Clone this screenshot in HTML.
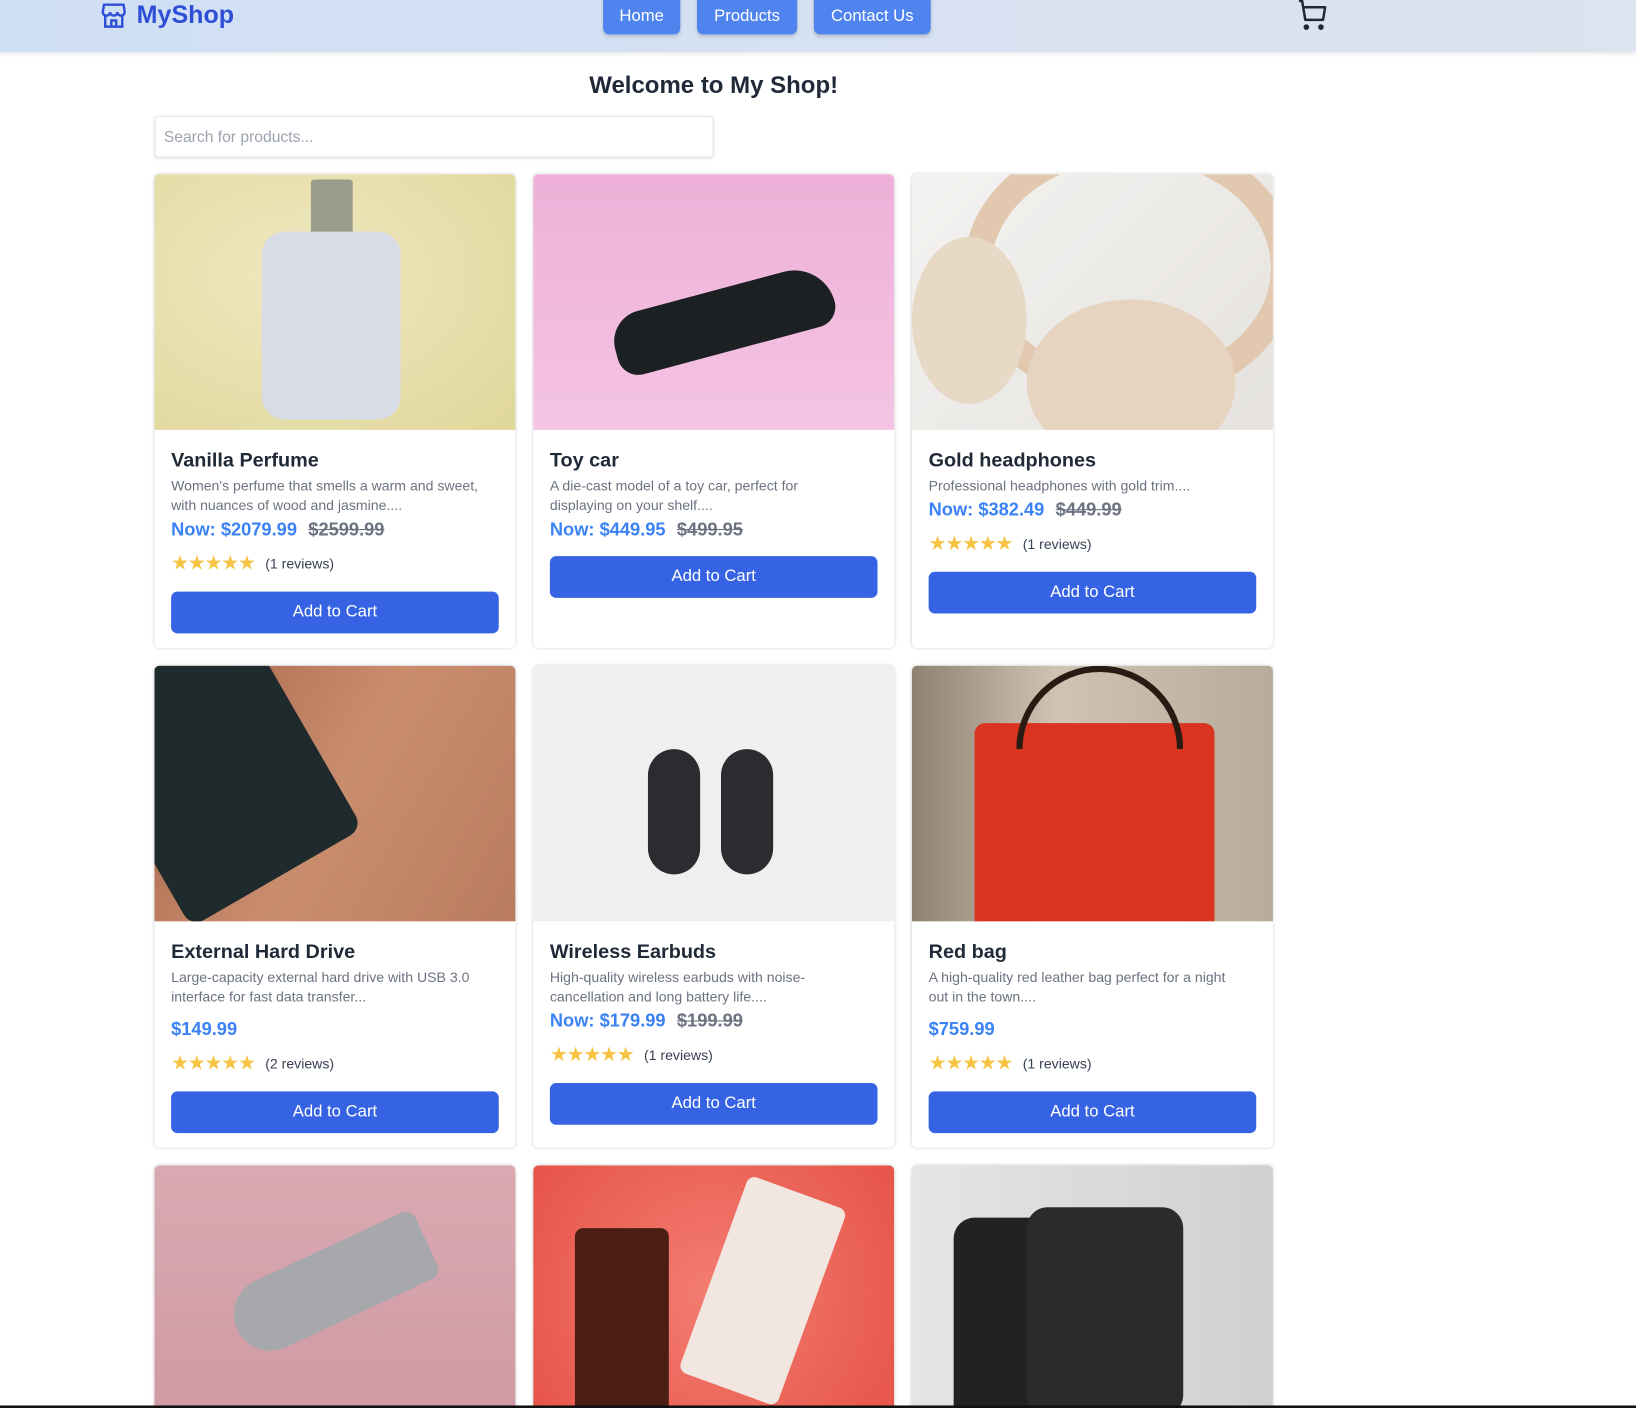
<!DOCTYPE html>
<html><head><meta charset="utf-8"><style>
*{box-sizing:border-box;margin:0;padding:0}
html,body{width:1636px;height:1408px;overflow:hidden;background:#fff}
#w{width:1568px;height:1350px;transform:scale(1.0434);transform-origin:0 0;position:relative;font-family:"Liberation Sans",sans-serif}
.hdr{position:absolute;left:0;top:0;width:1568px;height:50px;background:linear-gradient(90deg,#cfdff5,#dde3ef);box-shadow:0 2px 4px rgba(0,0,0,.08)}
.logo{position:absolute;left:95px;top:0;height:30px;display:flex;align-items:center;gap:8px;color:#2f4fd6;font-weight:bold;font-size:24px}
.nav{position:absolute;top:-6px;height:39px;background:#4f83ee;color:#fff;border-radius:6px;font-size:16px;display:flex;align-items:center;justify-content:center;padding-top:4px;box-shadow:0 2px 3px rgba(0,0,0,.15)}
h1{position:absolute;left:0;width:1368px;top:68px;text-align:center;font-size:23px;color:#1f2937}
.search{position:absolute;left:148px;top:111px;width:536px;height:40px;border:1px solid #e2e4e8;border-radius:4px;box-shadow:0 1px 3px rgba(0,0,0,.1);font-size:15px;color:#9ca3af;padding:11px 8px}
.card{position:absolute;width:346px;background:#fff;border-radius:5px;box-shadow:0 0 3px rgba(0,0,0,.18);overflow:hidden}
.r1{height:454px}.r2{height:462px}
.img{height:245px;position:relative;overflow:hidden}
.body{padding:16px 16px 15px}
.t{font-size:19px;font-weight:bold;color:#1f2937;line-height:28px}
.d{font-size:13.5px;color:#6b7280;line-height:19px}
.p{font-size:17.5px;font-weight:bold;color:#3b82f6;line-height:26px}
.p s{color:#6b7280;margin-left:6px}
.p.pl{margin-top:8px}
.st{margin-top:11px;line-height:20px;font-size:13.5px;color:#374151;display:flex;align-items:center}
.st b{color:#f6c343;font-size:19px;letter-spacing:-1px;margin-right:10px;font-weight:normal}
.btn{margin-top:16px;height:40px;background:#3563e3;border-radius:6px;color:#fff;font-size:16px;display:flex;align-items:center;justify-content:center}
.btn.n{margin-top:13px}
</style></head><body><div id="w">
<div class="hdr">
<div class="logo"><svg width="28" height="28" viewBox="0 0 24 24" fill="none" stroke="#2f4fd6" stroke-width="2"><path d="M4 3h16l1 6a3 3 0 0 1-6 0 3 3 0 0 1-6 0 3 3 0 0 1-6 0z"/><path d="M5 11v10h14V11M10 21v-5h4v5"/></svg>MyShop</div>
<div class="nav" style="left:578px;width:74px">Home</div>
<div class="nav" style="left:668px;width:96px">Products</div>
<div class="nav" style="left:780px;width:112px">Contact Us</div>
<svg style="position:absolute;left:1243px;top:0" width="32" height="32" viewBox="0 0 32 32" fill="none" stroke="#1f2937" stroke-width="2.4" stroke-linecap="round" stroke-linejoin="round"><path d="M3 1h2l3 18h17l2-12H7"/><circle cx="9" cy="26" r="1.5" fill="#1f2937"/><circle cx="23" cy="26" r="1.5" fill="#1f2937"/></svg>
</div>
<h1>Welcome to My Shop!</h1>
<div class="search">Search for products...</div>

<div class="card r1" style="left:148px;top:167px"><div class="img" style="background:radial-gradient(ellipse at 40% 40%,#efe8c0,#e0d79a)"><div style="position:absolute;left:150px;top:5px;width:40px;height:55px;background:#9a9c8c;border-radius:3px"></div><div style="position:absolute;left:103px;top:55px;width:133px;height:180px;background:#d8dce6;border-radius:22px"></div></div>
<div class="body"><div class="t">Vanilla Perfume</div><div class="d">Women's perfume that smells a warm and sweet, with nuances of wood and jasmine....</div><div class="p">Now: $2079.99 <s>$2599.99</s></div><div class="st"><b>★★★★★</b>(1 reviews)</div><div class="btn">Add to Cart</div></div></div>

<div class="card r1" style="left:511px;top:167px"><div class="img" style="background:linear-gradient(180deg,#eeb0d8,#f4c4e4)"><div style="position:absolute;left:75px;top:110px;width:215px;height:60px;background:#1d2022;border-radius:30px 40px 20px 20px;transform:rotate(-15deg)"></div></div>
<div class="body"><div class="t">Toy car</div><div class="d" style="width:260px">A die-cast model of a toy car, perfect for displaying on your shelf....</div><div class="p">Now: $449.95 <s>$499.95</s></div><div class="btn n">Add to Cart</div></div></div>

<div class="card r1" style="left:874px;top:167px"><div class="img" style="background:linear-gradient(135deg,#f4f3f1,#e5e2de)"><div style="position:absolute;left:50px;top:-40px;width:320px;height:260px;border:26px solid #e2c8ae;border-radius:50%"></div><div style="position:absolute;left:0;top:60px;width:110px;height:160px;background:#e8d8c6;border-radius:50%"></div><div style="position:absolute;left:110px;top:120px;width:200px;height:160px;background:#e6d4c0;border-radius:50%"></div></div>
<div class="body"><div class="t">Gold headphones</div><div class="d">Professional headphones with gold trim....</div><div class="p">Now: $382.49 <s>$449.99</s></div><div class="st"><b>★★★★★</b>(1 reviews)</div><div class="btn">Add to Cart</div></div></div>

<div class="card r2" style="left:148px;top:638px"><div class="img" style="background:linear-gradient(120deg,#a8644a,#c98d6e 50%,#b97c60)"><div style="position:absolute;left:-40px;top:-30px;width:190px;height:250px;background:#1f2a2c;border-radius:14px;transform:rotate(-30deg)"></div></div>
<div class="body"><div class="t">External Hard Drive</div><div class="d">Large-capacity external hard drive with USB 3.0 interface for fast data transfer...</div><div class="p pl">$149.99</div><div class="st"><b>★★★★★</b>(2 reviews)</div><div class="btn">Add to Cart</div></div></div>

<div class="card r2" style="left:511px;top:638px"><div class="img" style="background:#efefef"><div style="position:absolute;left:110px;top:80px;width:50px;height:120px;background:#2a2c30;border-radius:25px"></div><div style="position:absolute;left:180px;top:80px;width:50px;height:120px;background:#2a2c30;border-radius:25px"></div></div>
<div class="body"><div class="t">Wireless Earbuds</div><div class="d">High-quality wireless earbuds with noise-cancellation and long battery life....</div><div class="p">Now: $179.99 <s>$199.99</s></div><div class="st"><b>★★★★★</b>(1 reviews)</div><div class="btn">Add to Cart</div></div></div>

<div class="card r2" style="left:874px;top:638px"><div class="img" style="background:linear-gradient(90deg,#8e8172,#cfc3b3 40%,#b8ab9a)"><div style="position:absolute;left:60px;top:55px;width:230px;height:190px;background:#d8341f;border-radius:10px 10px 0 0"></div><div style="position:absolute;left:100px;top:0;width:160px;height:80px;border:6px solid #2a1a14;border-radius:50%/100% 100% 0 0;border-bottom:none"></div></div>
<div class="body"><div class="t">Red bag</div><div class="d" style="width:300px">A high-quality red leather bag perfect for a night out in the town....</div><div class="p pl">$759.99</div><div class="st"><b>★★★★★</b>(1 reviews)</div><div class="btn">Add to Cart</div></div></div>

<div class="card" style="left:148px;top:1117px;height:240px"><div class="img" style="background:linear-gradient(180deg,#d9a9b2,#cf9aa4)"><div style="position:absolute;left:70px;top:80px;width:200px;height:70px;background:#a6a8ac;border-radius:35px 10px 10px 35px;transform:rotate(-25deg)"></div></div></div>
<div class="card" style="left:511px;top:1117px;height:240px"><div class="img" style="background:radial-gradient(circle,#f47d72,#e65448)"><div style="position:absolute;left:40px;top:60px;width:90px;height:200px;background:#4a1e14;border-radius:8px"></div><div style="position:absolute;left:170px;top:20px;width:100px;height:200px;background:#f2e6e0;border-radius:8px;transform:rotate(20deg)"></div></div></div>
<div class="card" style="left:874px;top:1117px;height:240px"><div class="img" style="background:linear-gradient(90deg,#e4e6e6,#cfd1d1)"><div style="position:absolute;left:40px;top:50px;width:140px;height:200px;background:#222;border-radius:20px"></div><div style="position:absolute;left:110px;top:40px;width:150px;height:200px;background:#2b2b2b;border-radius:20px"></div></div></div>
<div style="position:absolute;left:0;top:1347px;width:1568px;height:3px;background:#111"></div>
</div></body></html>
